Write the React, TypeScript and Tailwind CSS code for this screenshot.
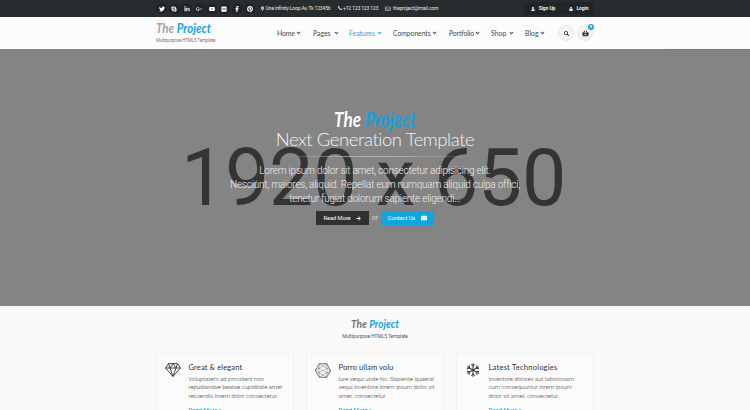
import type { ReactNode } from "react";
import {
  FaTwitter, FaSkype, FaLinkedinIn, FaGooglePlusG, FaYoutube, FaFlickr, FaFacebookF, FaPinterest,
  FaMapMarkerAlt, FaPhoneAlt, FaRegEnvelope, FaUser, FaLock, FaSearch, FaShoppingBasket,
  FaArrowRight, FaEnvelope, FaAngleDown,
} from "react-icons/fa";

const socials = [FaTwitter, FaSkype, FaLinkedinIn, FaGooglePlusG, FaYoutube, FaFlickr, FaFacebookF, FaPinterest];

const nav = [
  { label: "Home", cls: "w-[36px]", text: "w-[19px] tracking-[-0.200px]" },
  { label: "Pages", cls: "w-[36px]", text: "w-[21px]" },
  { label: "Features", cls: "w-[44px] text-[#2ea3dc]", text: "w-[28px]" },
  { label: "Components", cls: "w-[56px]", text: "w-[39px] tracking-[-0.100px]" },
  { label: "Portfolio", cls: "w-[42px]", text: "w-[26px] tracking-[-0.140px]" },
  { label: "Shop", cls: "w-[34px]", text: "w-[17.500px]" },
  { label: "Blog", cls: "w-[33px]", text: "w-[14.500px]" },
];

function Logo({ className, first }: { className: string; first: string }) {
  return (
    <svg viewBox="0 0 82 24" className={`overflow-visible ${className}`} fontFamily="Lato, sans-serif" fontStyle="italic" fontWeight="700" fontSize="20">
      <text x="0" y="17" fill={first} textLength="27" lengthAdjust="spacingAndGlyphs">The</text>
      <text x="31" y="17" fill="#0fa5df" textLength="51" lengthAdjust="spacingAndGlyphs">Project</text>
    </svg>
  );
}

function Diamond() {
  return (
    <svg viewBox="0 0 16 14" className="h-[14px] w-[16px]" fill="none" stroke="#333" strokeWidth="0.9" strokeLinejoin="round">
      <path d="M3.5.6h9L15.5 5 8 13.4.5 5zM.5 5h15M3.5.6 5 5l3 8.4L11 5l1.500-4.400M5 5l3-4.400L11 5" />
    </svg>
  );
}

function Hexagon() {
  return (
    <svg viewBox="0 0 16 15" className="h-[15px] w-[16px]" fill="none" stroke="#555" strokeLinejoin="round">
      <path strokeWidth="0.8" d="M4.300.7h7.400l3.800 6.800-3.800 6.800H4.300L.5 7.500z" />
      <path strokeWidth="0.400" d="M4.300.7 8 3l3.700-2.300M15.500 7.500 12 5.200 11.700.7M15.500 7.500 12 9.800l-.3 4.500M8 12l3.700 2.300M8 12l-3.700 2.300L4 9.800.5 7.500 4 5.200 4.300.7M8 3l4 2.200v4.600L8 12 4 9.800V5.200zM4 5.200l8 4.600M12 5.200 4 9.800" />
    </svg>
  );
}

function Snowflake() {
  return (
    <svg viewBox="0 0 14 14" className="h-[14px] w-[14px] overflow-visible" fill="none" stroke="#333" strokeWidth="1">
      {[0, 60, 120, 180, 240, 300].map((a) => (
        <path key={a} transform={`rotate(${a} 7 7)`} d="M7 7V.2M5.100 1.200 7 3.100l1.900-1.900" />
      ))}
    </svg>
  );
}

function Card({ icon, title, titleCls, lines }: { icon: ReactNode; title: string; titleCls: string; lines: string[] }) {
  return (
    <article className="flex h-[80px] w-[138px] border border-[#f1f1f1] bg-[#fbfbfb] pt-[8px] pl-[8px]">
      <div className="flex h-[16px] w-[16px] items-center justify-center">{icon}</div>
      <div className="ml-[7.500px] whitespace-nowrap">
        <h3 className={`font-['Lato'] text-[7.600px] leading-[10px] text-[#333] ${titleCls}`}>{title}</h3>
        <div className="mt-[2.500px] font-['Roboto'] text-[6px] leading-[8.700px] font-light tracking-[-0.020px] text-[#444]">
          {lines.map((l) => <p key={l}>{l}</p>)}
        </div>
        <a className="mt-[5.500px] block font-['Roboto'] text-[6px] leading-[8px] text-[#0a9bd4]">Read More »</a>
      </div>
    </article>
  );
}

export default function App() {
  return (
    <div className="h-[410px] w-[750px] overflow-hidden bg-[#fafafa] font-['Roboto']">
      <div className="h-[17px] bg-[#272d2f]">
        <div className="mx-auto flex h-[17px] w-[438px] items-center whitespace-nowrap text-[5.100px] text-[#e6e6e6]">
          <div className="flex w-[105px] shrink-0 gap-[1.600px]">
            {socials.map((Icon, i) => (
              <span key={i} className="flex h-[11px] w-[11px] items-center justify-center rounded-full bg-[#1f2426] text-[6px] text-white"><Icon /></span>
            ))}
          </div>
          <span className="flex w-[76.500px] shrink-0 items-center gap-[1.500px]"><FaMapMarkerAlt className="h-[5px] w-[3px] shrink-0" /><span className="tracking-[-0.200px]">One Infinity Loop Av, Tk 123456</span></span>
          <span className="flex w-[47.500px] shrink-0 items-center gap-[1.500px]"><FaPhoneAlt className="size-[4px] shrink-0" /><span className="tracking-[-0.200px]">+12 123 123 123</span></span>
          <span className="flex shrink-0 items-center gap-[2.500px]"><FaRegEnvelope className="size-[5.500px] shrink-0" /><span className="tracking-[-0.170px]">theproject@mail.com</span></span>
          <div className="ml-auto flex h-[13px] gap-[1px] font-bold">
            <span className="flex w-[38px] items-center justify-center gap-[4px] bg-[#202527]"><FaUser className="size-[4px]" /><span className="tracking-[-0.150px]">Sign Up</span></span>
            <span className="flex w-[31px] items-center justify-center gap-[4px] bg-[#202527]"><FaLock className="size-[4px]" /><span className="tracking-[-0.150px]">Login</span></span>
          </div>
        </div>
      </div>

      <header className="h-[32px] bg-[#fdfcfd]">
        <div className="mx-auto flex h-[32px] w-[438px]">
          <div className="w-[121px] pt-[4px]">
            <Logo className="h-[17px] w-[55px]" first="#a3a3a3" />
            <p className="text-[4.500px] leading-[6px] tracking-[-0.100px] whitespace-nowrap text-[#777]">Multipurpose HTML5 Template</p>
          </div>
          <nav className="flex h-[32px] items-center font-['Lato'] text-[6.900px] text-[#4a4a4a]">
            {nav.map((n) => (
              <a key={n.label} className={`flex shrink-0 items-center ${n.cls}`}>
                <span className={n.text}>{n.label}</span>
                <FaAngleDown className="h-[6px] w-[5px] shrink-0" />
              </a>
            ))}
          </nav>
          <div className="flex items-center gap-[3px]">
            <span className="flex size-[16px] items-center justify-center rounded-full border border-[#e8e8e8] bg-[#f3f3f3] text-[#222]"><FaSearch className="size-[5px]" /></span>
            <span className="relative flex size-[16px] items-center justify-center rounded-full border border-[#e8e8e8] bg-[#f3f3f3] text-[#222]">
              <FaShoppingBasket className="size-[7px]" />
              <span className="absolute -top-[2px] -right-[2px] flex size-[6px] items-center justify-center rounded-full bg-[#0fa5df] text-[4px] font-bold text-white">0</span>
            </span>
          </div>
        </div>
      </header>

      <section className="relative h-[257px] bg-[#848484]">
        <div className="flex h-px bg-[#777]"><div className="w-[666px] bg-[#4197b6]" /></div>
        <div className="absolute inset-x-0 top-[82px] pr-[3px] text-center text-[79px] leading-[94px] tracking-[-0.400px] whitespace-nowrap text-[#343434]">1920 x 650</div>
        <div className="relative flex flex-col items-center whitespace-nowrap">
          <Logo className="mt-[60px] h-[24px] w-[82px]" first="#ffffff" />
          <h1 className="-mt-[6px] font-['Lato'] text-[18.500px] leading-[22px] font-light tracking-[-0.430px] text-[#f4f4f4]">Next Generation Template</h1>
          <div className="mt-[6px] h-px w-[200px] bg-linear-to-r from-transparent via-[#b8b8b8] to-transparent" />
          <div className="mt-[7px] text-center text-[10px] leading-[14px] font-light tracking-[-0.220px] text-[#efefef]">
            <p>Lorem ipsum dolor sit amet, consectetur adipisicing elit.</p>
            <p>Nesciunt, maiores, aliquid. Repellat eum numquam aliquid culpa offici,</p>
            <p>tenetur fugiat dolorum sapiente eligendi...</p>
          </div>
          <div className="mt-[5px] flex items-center text-[5.800px] text-white">
            <button className="flex h-[14px] w-[53px] items-center justify-center gap-[6px] bg-[#303030]"><span className="tracking-[-0.100px]">Read More</span><FaArrowRight className="size-[5px]" /></button>
            <span className="w-[12px] text-center text-[7px] leading-[10px] font-light">or</span>
            <button className="flex h-[14px] w-[53px] items-center justify-center gap-[6px] bg-[#0fa5df]"><span className="tracking-[-0.100px]">Contact Us</span><FaEnvelope className="size-[6px]" /></button>
          </div>
        </div>
      </section>

      <section className="flex flex-col items-center border-t border-[#f3f3f3] pt-[11px]">
        <Logo className="h-[15px] w-[48px]" first="#777777" />
        <p className="text-[4.900px] leading-[7px] tracking-[-0.060px] whitespace-nowrap text-[#555]">Multipurpose HTML5 Template</p>
        <div className="mt-[13px] flex gap-[12px]">
          <Card icon={<Diamond />} title="Great & elegant" titleCls="tracking-[0.100px]" lines={[
            "Voluptatem ad provident non",
            "repudiandae beatae cupiditate amet",
            "reiciendis lorem dolor consectetur.",
          ]} />
          <Card icon={<Hexagon />} title="Porro ullam volu" titleCls="tracking-[0.050px]" lines={[
            "Iure sequi unde hic. Sapiente quaerat",
            "sequi inventore lorem ipsum dolor sit",
            "amet, consectetur.",
          ]} />
          <Card icon={<Snowflake />} title="Latest Technologies" titleCls="tracking-[0.200px]" lines={[
            "Inventore dolores aut laboriosam",
            "cum consequuntur lorem ipsum",
            "dolor sit amet, consectetur.",
          ]} />
        </div>
      </section>
    </div>
  );
}
